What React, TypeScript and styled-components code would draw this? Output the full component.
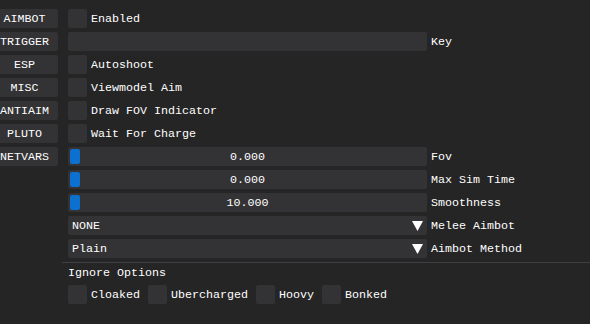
import React from "react";
import styled, { createGlobalStyle } from "styled-components";

const Global = createGlobalStyle`
  html, body { margin: 0; padding: 0; background: #252525; }
  body { width: 590px; height: 324px; overflow: hidden; font-family: "Liberation Mono", "DejaVu Sans Mono", monospace; font-size: 11.67px; color: #ffffff; }
`;

const Page = styled.div`
  display: flex;
  align-items: flex-start;
  gap: 10px;
  padding-top: 9px;
  margin-left: -9px;
`;

const Tabs = styled.div`
  display: flex;
  flex-direction: column;
  gap: 4px;
  width: 67px;
  flex: none;
`;

const Tab = styled.div`
  height: 19px;
  background: #333336;
  border-radius: 2px;
  display: flex;
  align-items: center;
  justify-content: center;
  white-space: nowrap;
`;

const Content = styled.div`
  display: flex;
  flex-direction: column;
  gap: 4px;
  flex: 1;
`;

const Row = styled.div`
  display: flex;
  align-items: center;
  gap: 4px;
  height: 19px;
  white-space: nowrap;
`;

const Box = styled.div`
  width: 19px;
  height: 19px;
  background: #333336;
  border-radius: 2px;
  flex: none;
`;

const Frame = styled.div`
  position: relative;
  width: 359px;
  height: 19px;
  background: #333336;
  border-radius: 2px;
  display: flex;
  align-items: center;
  flex: none;
`;

const Grab = styled.div`
  position: absolute;
  left: 2px;
  top: 2px;
  width: 10px;
  height: 15px;
  background: #0c70cf;
  border-radius: 2px;
`;

const Value = styled.span`
  flex: 1;
  text-align: center;
`;

const ComboText = styled.span`
  flex: 1;
  padding-left: 4px;
`;

const Arrow = styled.svg`
  width: 11px;
  height: 10px;
  margin-right: 4px;
  flex: none;
`;

const Separator = styled.div`
  height: 1px;
  background: #3f3f43;
  margin: 0 0 0 -6px;
  width: 528px;
`;

const Heading = styled.div`
  height: 15px;
  line-height: 15px;
  margin-top: -1px;
`;

const Options = styled.div`
  display: flex;
  align-items: center;
  gap: 8px;
  height: 19px;
`;

const Check = styled.div`
  display: flex;
  align-items: center;
  gap: 4px;
  white-space: nowrap;
`;

const Section = styled.div`
  display: flex;
  flex-direction: column;
  gap: 4px;
`;

const tabs = ["AIMBOT", "TRIGGER", "ESP", "MISC", "ANTIAIM", "PLUTO", "NETVARS"];

const Checkbox = ({ label }: { label: string }) => (
  <Row>
    <Box />
    <span>{label}</span>
  </Row>
);

const Slider = ({ value, label }: { value: string; label: string }) => (
  <Row>
    <Frame>
      <Grab />
      <Value>{value}</Value>
    </Frame>
    <span>{label}</span>
  </Row>
);

const Combo = ({ value, label }: { value: string; label: string }) => (
  <Row>
    <Frame>
      <ComboText>{value}</ComboText>
      <Arrow viewBox="0 0 11 10">
        <polygon points="0,0 11,0 5.5,10" fill="#ffffff" />
      </Arrow>
    </Frame>
    <span>{label}</span>
  </Row>
);

export default function App() {
  return (
    <>
      <Global />
      <Page>
        <Tabs>
          {tabs.map((t) => (
            <Tab key={t}>{t}</Tab>
          ))}
        </Tabs>
        <Content>
          <Checkbox label="Enabled" />
          <Row>
            <Frame />
            <span>Key</span>
          </Row>
          <Checkbox label="Autoshoot" />
          <Checkbox label="Viewmodel Aim" />
          <Checkbox label="Draw FOV Indicator" />
          <Checkbox label="Wait For Charge" />
          <Slider value="0.000" label="Fov" />
          <Slider value="0.000" label="Max Sim Time" />
          <Slider value="10.000" label="Smoothness" />
          <Combo value="NONE" label="Melee Aimbot" />
          <Combo value="Plain" label="Aimbot Method" />
          <Section>
            <Separator />
            <Heading>Ignore Options</Heading>
            <Options>
              {["Cloaked", "Ubercharged", "Hoovy", "Bonked"].map((o) => (
                <Check key={o}>
                  <Box />
                  <span>{o}</span>
                </Check>
              ))}
            </Options>
          </Section>
        </Content>
      </Page>
    </>
  );
}
